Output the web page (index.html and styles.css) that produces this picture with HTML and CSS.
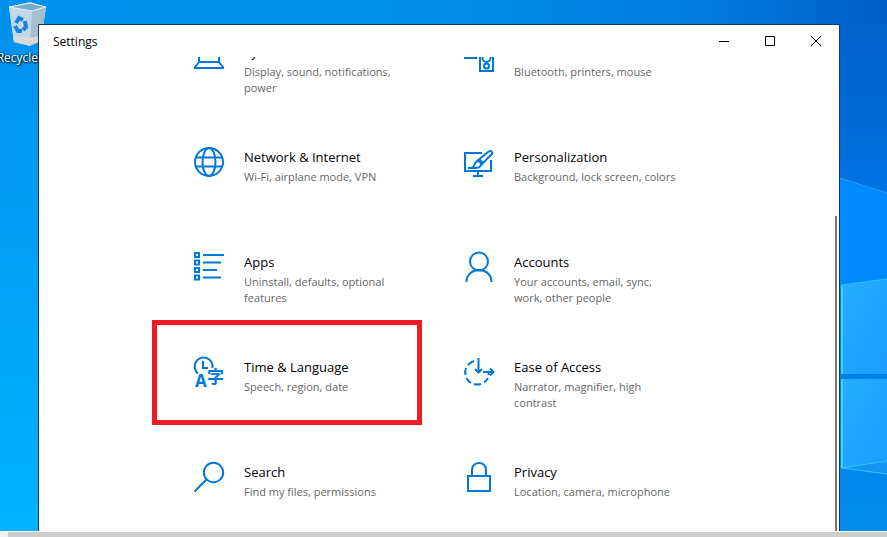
FILE: index.html
```html
<!DOCTYPE html>
<html lang="en">
<head>
<meta charset="utf-8">
<title>Settings</title>
<link rel="stylesheet" href="styles.css">
</head>
<body>
<div class="desktop">
  <svg class="wallpaper" viewBox="0 0 887 531" preserveAspectRatio="none" aria-hidden="true">
    <defs>
      <linearGradient id="sky" x1="0" y1="0" x2="1" y2="0">
        <stop offset="0" stop-color="#0091ee"/><stop offset=".4" stop-color="#0093ec"/><stop offset=".8" stop-color="#007be0"/><stop offset="1" stop-color="#005dc8"/>
      </linearGradient>
      <linearGradient id="left" x1="0" y1="0" x2="0" y2="1">
        <stop offset="0" stop-color="#0091ee"/><stop offset=".5" stop-color="#00a2f8"/><stop offset="1" stop-color="#00b2ff"/>
      </linearGradient>
      <linearGradient id="right" x1="0" y1="0" x2="0" y2="1">
        <stop offset="0" stop-color="#0063ce"/><stop offset=".2" stop-color="#006ad6"/><stop offset=".36" stop-color="#0078ea"/><stop offset=".7" stop-color="#0080ea"/><stop offset="1" stop-color="#008cec"/>
      </linearGradient>
      <linearGradient id="pane" x1="0" y1="0" x2="1" y2="1">
        <stop offset="0" stop-color="#25aeff"/><stop offset="1" stop-color="#1c9cff"/>
      </linearGradient>
    </defs>
    <rect width="887" height="531" fill="url(#sky)"/>
    <rect y="24" width="60" height="507" fill="url(#left)"/>
    <rect x="830" y="24" width="57" height="507" fill="url(#right)"/>
    <path d="M830 175L887 193V290H830z" fill="#008aff"/>
    <path d="M830 175L887 193" stroke="#2b9dff" fill="none"/>
    <path d="M841 285L887 279V374H841z" fill="url(#pane)"/>
    <path d="M841 379H887V474L841 468z" fill="url(#pane)"/>
    <path d="M841 468L887 461V474z" fill="#1594f4"/>
    <path d="M842 374V285L887 279M842 468L887 461M842 468L887 474" fill="none" stroke="#2fc0ff"/>
    <path d="M842 285V374M842 379V468" stroke="#30d8ff" stroke-width="2"/>
    <path d="M841 376.500H887" stroke="#007fe6" stroke-width="5"/>
  </svg>

  <div class="shortcut">
    <svg width="40" height="44" viewBox="0 0 40 44" aria-hidden="true">
      <path d="M1 5L22 0L38 5L33 39L22 44L6 40z" fill="#b9d5e8"/>
      <path d="M1 5L24 9L22 44L6 40z" fill="#c3d8e6"/>
      <path d="M24 9L38 5L33 39L22 44z" fill="#a5bfd1"/>
      <path d="M1 5L22 1L38 5L24 9z" fill="#78aecc"/>
      <path d="M5 34L22 36L34 33L33 39L22 43L6 40z" fill="#dcd8d4"/>
      <path d="M1 5L22 1L38 5L24 9z" fill="none" stroke="#e9f4fb"/>
      <g fill="none" stroke="#1685df" stroke-width="4">
        <path d="M8 21L11 16L15 18"/><path d="M17 19L18 25L15 28"/><path d="M7 24L10 29L14 29"/>
      </g>
    </svg>
    <span class="shortcut-label">Recycle Bin</span>
  </div>

  <main class="window">
    <header class="titlebar">
      <h1 class="window-title">Settings</h1>
      <button class="caption-button" aria-label="Minimize"><svg width="12" height="12" viewBox="0 0 12 12"><path d="M1 6.500H11"/></svg></button>
      <button class="caption-button" aria-label="Maximize"><svg width="12" height="12" viewBox="0 0 12 12"><path d="M1.500 1.500H10.500V10.500H1.500z"/></svg></button>
      <button class="caption-button" aria-label="Close"><svg width="12" height="12" viewBox="0 0 12 12"><path d="M1 1L11 11M11 1L1 11"/></svg></button>
    </header>
    <div class="viewport">
      <nav class="categories">
        <a class="tile" href="#system">
          <svg class="icon" viewBox="0 0 30 30"><path d="M5 5H25V20H5zM5 20L1 25V26H29V25L25 20"/></svg>
          <span class="text"><span class="name">System</span><span class="description">Display, sound, notifications, power</span></span>
        </a>
        <a class="tile" href="#devices">
          <svg class="icon" viewBox="0 0 30 30"><path d="M13 16H1V3H24V8M0 16H13M16 9H29V29H16z"/><circle cx="22.500" cy="16" r="4"/><circle cx="22.500" cy="24" r="2.500"/></svg>
          <span class="text"><span class="name">Devices</span><span class="description">Bluetooth, printers, mouse</span></span>
        </a>
        <a class="tile" href="#network">
          <svg class="icon" viewBox="0 0 30 30"><circle cx="15" cy="15" r="14"/><ellipse cx="15" cy="15" rx="6.500" ry="14"/><path d="M2 10.500H28M2 19.500H28"/></svg>
          <span class="text"><span class="name">Network &amp; Internet</span><span class="description">Wi-Fi, airplane mode, VPN</span></span>
        </a>
        <a class="tile" href="#personalization">
          <svg class="icon" viewBox="0 0 30 30"><path d="M18 6H1V24H27V13M14 24V29M9 29H19M4 21H12C15 21 17 19 17 17C17 15 14 13 12 15C10 17 11 20 7 21M13 14L24 5Q27 3 28 5Q29 6 27 8L17 18M15 12L19 16"/></svg>
          <span class="text"><span class="name">Personalization</span><span class="description">Background, lock screen, colors</span></span>
        </a>
        <a class="tile" href="#apps">
          <svg class="icon" viewBox="0 0 30 30"><path d="M1 1H5V5H1zM1 8.500H5V12.500H1zM1 16H5V20H1zM1 23.500H5V27.500H1zM9 3H30M9 10.500H27M9 18H23M9 25.500H27"/></svg>
          <span class="text"><span class="name">Apps</span><span class="description">Uninstall, defaults, optional features</span></span>
        </a>
        <a class="tile" href="#accounts">
          <svg class="icon" viewBox="0 0 30 30"><circle cx="15" cy="9.500" r="9"/><path d="M2.500 30C2.500 14 27.500 14 27.500 30"/></svg>
          <span class="text"><span class="name">Accounts</span><span class="description">Your accounts, email, sync, work, other people</span></span>
        </a>
        <a class="tile tile-marked" href="#time">
          <svg class="icon" viewBox="0 0 30 30"><path d="M4 16.500A9 9 0 1 1 18.500 11M9 4V11H14"/><text class="icon-latin" x="1" y="30">A</text><text class="icon-cjk" x="13" y="26">字</text></svg>
          <span class="text"><span class="name">Time &amp; Language</span><span class="description">Speech, region, date</span></span>
        </a>
        <a class="tile" href="#ease">
          <svg class="icon" viewBox="0 0 30 30"><path d="M10 4A12 12 0 0 0 4 8M2 11A12 12 0 0 0 1.500 18M2.500 21A12 12 0 0 0 7 26M10 27A12 12 0 0 0 17 27M20 25.500A12 12 0 0 0 24 21M24.500 18L25 15M19 15H29M26 11.500L29.500 15L26 18.500M14.500 1V15M11 12L14.500 15.500L18 12"/></svg>
          <span class="text"><span class="name">Ease of Access</span><span class="description">Narrator, magnifier, high contrast</span></span>
        </a>
        <a class="tile" href="#search">
          <svg class="icon" viewBox="0 0 30 30"><circle cx="19.500" cy="10.500" r="9.700"/><path d="M12.500 17.500L.5 29.500"/></svg>
          <span class="text"><span class="name">Search</span><span class="description">Find my files, permissions</span></span>
        </a>
        <a class="tile" href="#privacy">
          <svg class="icon" viewBox="0 0 30 30"><path d="M4 14H26V29H4zM8 14V8C8 -1.300 22 -1.300 22 8V14"/></svg>
          <span class="text"><span class="name">Privacy</span><span class="description">Location, camera, microphone</span></span>
        </a>
      </nav>
      <div class="scroll-thumb"></div>
    </div>
  </main>
</div>
<div class="bottom-scroll"></div>
</body>
</html>
```
FILE: styles.css
```css
* {
  box-sizing: border-box;
}

body {
  margin: 0;
  height: 100vh;
  display: flex;
  flex-direction: column;
  overflow: hidden;
  font-family: "Open Sans", "Noto Sans", sans-serif;
}

.desktop {
  position: relative;
  flex: 1;
  min-height: 0;
  display: flex;
  padding: 24px 47px 0 38px;
}

.wallpaper {
  position: absolute;
  inset: 0;
  width: 100%;
  height: 100%;
}

.shortcut {
  position: absolute;
  top: 2px;
  left: -10px;
  width: 76px;
  display: flex;
  flex-direction: column;
  align-items: center;
  gap: 4px;
}

.shortcut-label {
  color: #fff;
  font-size: 12px;
  line-height: 16px;
  white-space: nowrap;
  text-shadow: 1px 1px 2px #000, 0 0 2px #000;
}

.window {
  position: relative;
  flex: 1;
  min-width: 0;
  display: flex;
  flex-direction: column;
  background: #fff;
  border: 1px solid #163b5b;
  border-bottom: 0;
}

.titlebar {
  display: flex;
  align-items: stretch;
  height: 32px;
}

.window-title {
  flex: 1;
  margin: 0;
  padding-left: 14px;
  font-size: 12px;
  font-weight: 400;
  line-height: 34px;
  color: #000;
}

.caption-button {
  width: 46px;
  padding: 0;
  border: 0;
  background: none;
  display: flex;
  align-items: center;
  justify-content: center;
}

.caption-button svg {
  fill: none;
  stroke: #000;
}

.viewport {
  position: relative;
  flex: 1;
  min-height: 0;
  overflow: hidden;
}

.categories {
  display: grid;
  grid-template-columns: repeat(2, 270px);
  grid-auto-rows: 105px;
  margin-top: -52px;
  padding-left: 113px;
}

.tile {
  display: flex;
  gap: 20px;
  padding: 37px 12px 0 42px;
  color: #000;
  text-decoration: none;
}

.tile-marked {
  outline: 5px solid #ed1c24;
  outline-offset: -5px;
}

.icon {
  flex: none;
  width: 30px;
  height: 30px;
  overflow: visible;
  fill: none;
  stroke: #0078d7;
  stroke-width: 2;
}

.icon text {
  fill: #0078d7;
  stroke: none;
  font-weight: 700;
}

.icon-latin {
  font-family: "Open Sans", sans-serif;
  font-size: 17px;
}

.icon-cjk {
  font-family: "Noto Sans CJK JP", sans-serif;
  font-size: 17px;
}

.text {
  min-width: 0;
}

.name,
.description {
  display: block;
}

.name {
  font-size: 13px;
  line-height: 20px;
}

.description {
  margin-top: 2px;
  font-size: 11px;
  line-height: 16px;
  color: #666;
}

.scroll-thumb {
  position: absolute;
  top: 159px;
  right: 2px;
  bottom: 0;
  width: 2px;
  background: #777;
}

.bottom-scroll {
  height: 6px;
  border-top: 1px solid #fff;
  border-left: 8px solid #f0f0f0;
  background: #cdcdcd;
}
```
